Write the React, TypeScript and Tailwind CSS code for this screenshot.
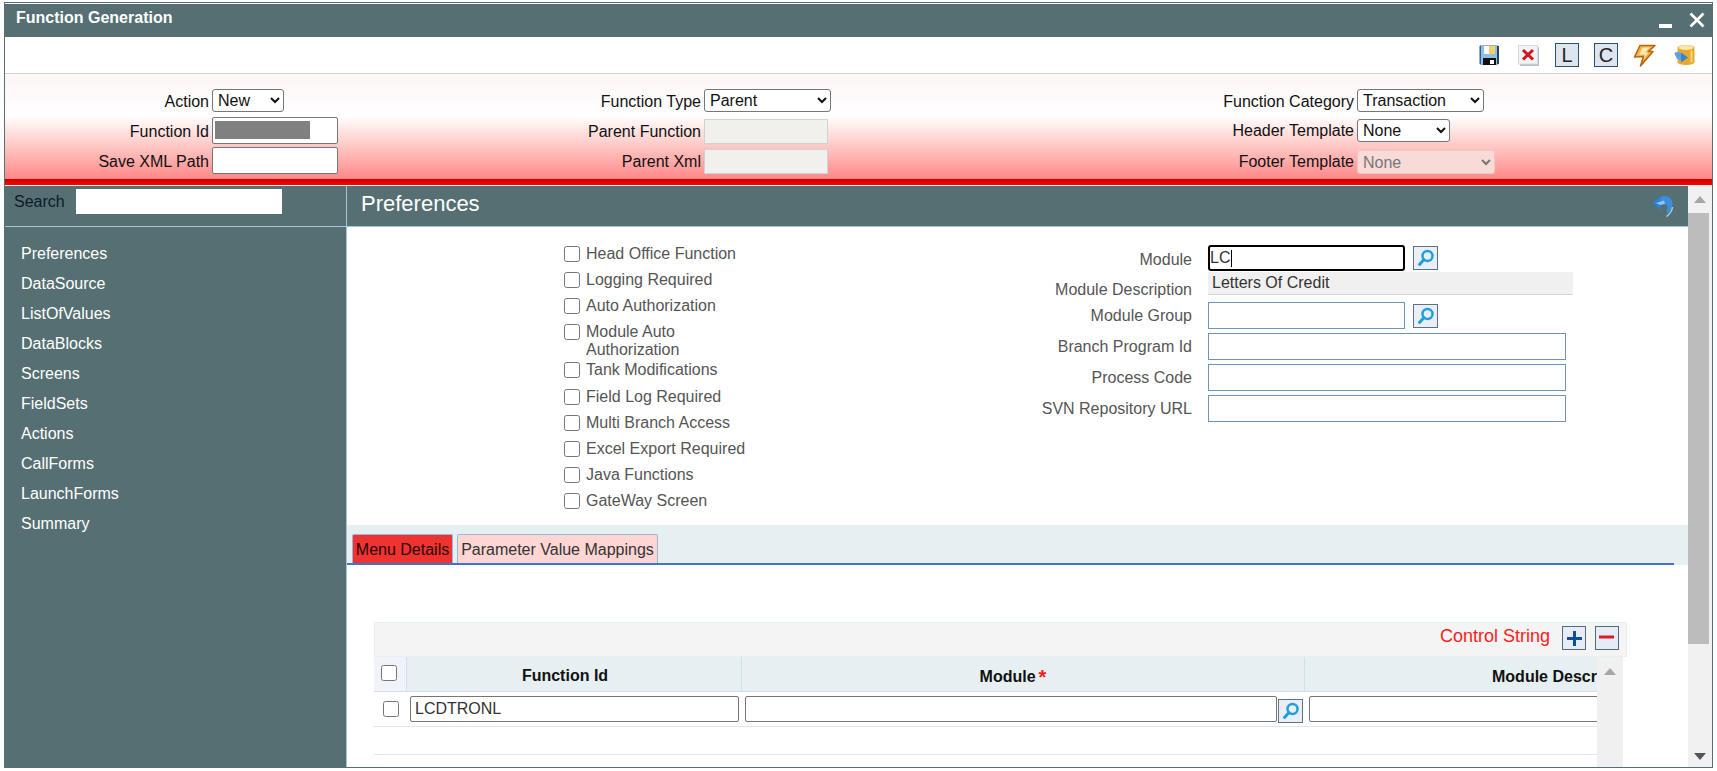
import React from "react";

const Search = () => (
  <svg width="18" height="18" viewBox="0 0 18 18" fill="none">
    <circle cx="10.5" cy="7" r="5" stroke="#1f9fdc" strokeWidth="2.5" />
    <path d="M7 10.5 L2.5 15.5" stroke="#1f9fdc" strokeWidth="3" strokeLinecap="round" />
  </svg>
);

const SearchBtn = () => (
  <button className="w-[25px] h-[24px] shrink-0 flex items-center justify-center border border-[#5a7480] bg-[#e9eef8]">
    <Search />
  </button>
);

const Floppy = () => (
  <svg width="20" height="20" viewBox="0 0 20 20">
    <rect x="0.5" y="0.5" width="19" height="19" rx="1" fill="#2f5f8f" />
    <rect x="2" y="1" width="16" height="18" fill="#8fc0ea" />
    <rect x="5" y="1" width="11" height="8" fill="#fff" />
    <rect x="10" y="1" width="6" height="8" fill="#f5cf6e" />
    <rect x="4" y="13" width="13" height="7" fill="#111" />
    <rect x="11" y="15" width="4" height="4" fill="#fff" />
    <rect x="18" y="1" width="2" height="18" fill="#27455f" />
  </svg>
);

const CloseIcon = () => (
  <svg width="21" height="21" viewBox="0 0 21 21">
    <rect x="2" y="2" width="19" height="19" fill="#b9bec6" />
    <rect x="0.5" y="0.5" width="19" height="18.5" fill="#f1f3f8" stroke="#d5d9e2" />
    <path d="M5 5 L15 14.5 M15 5 L5 14.5" stroke="#d3141c" strokeWidth="3" />
  </svg>
);

const Bolt = () => (
  <svg width="23" height="23" viewBox="0 0 23 23">
    <path d="M7 1.5 L22 1.5 L15.5 7.5 L20 7.5 L7.5 22 L10.5 12.5 L1.5 13 Z" fill="#f3b24c" stroke="#b8660f" strokeWidth="1.6" strokeLinejoin="round" />
    <path d="M9.5 3.5 L17 3.5 L12 8.5 L15.5 8.5 L10.5 15 L12 10.5 L6 11 Z" fill="#fce9b4" />
  </svg>
);

const Db = () => (
  <svg width="21" height="22" viewBox="0 0 21 22">
    <path d="M3.5 3.5 C3.5 0 20.5 0 20.5 3.5 L20.5 18 C20.5 22 3.5 22 3.5 18 Z" fill="#e6a92e" />
    <ellipse cx="12" cy="3.5" rx="7.5" ry="2.6" fill="#f8e6a8" />
    <path d="M17.5 6.5 L17.5 18.5" stroke="#f8d680" strokeWidth="2" />
    <path d="M0.5 9 C2 7.5 5 7.5 7 9 L7 11.5 L10 11.5 L10 15.5 L7 15.5 C5 17 2 15 0.5 9 Z" fill="#58a2e8" />
    <path d="M7 8.5 L14 13.5 L7 18.5 Z" fill="#3a7fd4" />
  </svg>
);

const Refresh = () => (
  <svg width="22" height="23" viewBox="0 0 22 23" fill="none">
    <path d="M8 3.5 C13 0 21 3 20.5 11 C20.3 15 18 18 15 20 L15 15.5 C16.5 12.5 15 8.5 8 10 Z" fill="#3a8ee0" />
    <path d="M0.5 9 L8.5 2 L8.5 16 Z" fill="#2f7fd6" />
    <path d="M4 9 L12 6.5 L13 10 L8 11 Z" fill="#86c6f6" />
    <path d="M20.5 13 C20 17 18 20 14.5 22.5" stroke="#a8c8e0" strokeWidth="1.5" />
  </svg>
);

const BoxLetter = ({ c }: { c: string }) => (
  <div className="w-[24px] h-[24px] shrink-0 border border-[#27506e] bg-[#dfe5ee] flex items-center justify-center text-[20px] leading-none text-[#222]">
    {c}
  </div>
);

const Label = ({ w, children, tone = "text-[#111]" }: { w: string; children: React.ReactNode; tone?: string }) => (
  <label className={`${w} shrink-0 text-right text-[16px] leading-[18px] ${tone}`}>{children}</label>
);

const nativeSelect = "text-[16px] pl-[1px] bg-white border border-[#767676] rounded-[3px] h-[23px] text-[#111]";
const whiteInput = "h-[27px] w-[126px] bg-white border border-[#767676] rounded-[2px] block";
const disabledInput = "h-[25px] w-[124px] bg-[#f1f0ec] border border-[#d2d2d2] block";

const checks = [
  "Head Office Function",
  "Logging Required",
  "Auto Authorization",
  "Module Auto Authorization",
  "Tank Modifications",
  "Field Log Required",
  "Multi Branch Access",
  "Excel Export Required",
  "Java Functions",
  "GateWay Screen",
];

const nav = ["Preferences", "DataSource", "ListOfValues", "DataBlocks", "Screens", "FieldSets", "Actions", "CallForms", "LaunchForms", "Summary"];

const blueInput = "h-[27px] bg-white border border-[#6f94b8] block";

export default function App() {
  return (
    <div className="w-[1717px] h-[771px] bg-white pl-[4px] pr-[4px] pt-[2px] pb-[3px] overflow-hidden font-['Liberation_Sans',Arial,sans-serif]">
      <div className="w-full h-full border border-[#566f73] flex flex-col overflow-hidden bg-white">
        {/* title bar */}
        <div className="h-[33px] shrink-0 bg-[#566f73] flex items-center justify-between pl-[11px] pr-[7px] mt-[1px] text-white">
          <div className="text-[16px] font-bold leading-none -mt-[5px]">Function Generation</div>
          <div className="flex items-start gap-[17px] h-full pt-[7px]">
            <div className="w-[13px] h-[4px] bg-white mt-[13px]" />
            <svg width="16" height="16" viewBox="0 0 16 16" className="mt-[1px]">
              <path d="M1.5 1.5 L14.5 14.5 M14.5 1.5 L1.5 14.5" stroke="#fff" strokeWidth="2.8" />
            </svg>
          </div>
        </div>
        {/* toolbar */}
        <div className="h-[37px] shrink-0 bg-white border-b border-[#c9d6e2] flex items-center justify-end pr-[17px]">
          <div className="flex items-center">
            <div className="mr-[19px]"><Floppy /></div>
            <div className="mr-[16px]"><CloseIcon /></div>
            <div className="mr-[15px]"><BoxLetter c="L" /></div>
            <div className="mr-[15px]"><BoxLetter c="C" /></div>
            <div className="mr-[18px]"><Bolt /></div>
            <Db />
          </div>
        </div>
        {/* header form */}
        <div className="h-[105px] shrink-0 flex bg-gradient-to-b from-[#fff5f5] via-white via-40% to-[#ff8888]">
          <div className="w-[345px] shrink-0 flex flex-col pt-[15px]">
            <div className="flex items-center gap-[3px] h-[23px]">
              <Label w="w-[204px]" tone="text-[#111] pt-[2px]">Action</Label>
              <select className={`${nativeSelect} w-[72px]`} defaultValue="New"><option>New</option></select>
            </div>
            <div className="flex items-center gap-[3px] mt-[5px]">
              <Label w="w-[204px]" tone="text-[#111] pt-[2px]">Function Id</Label>
              <div className={`${whiteInput} pl-[2px] pt-[3px]`}><div className="w-[95px] h-[18px] bg-[#808080]" /></div>
            </div>
            <div className="flex items-center gap-[3px] mt-[3px]">
              <Label w="w-[204px]" tone="text-[#111] pt-[2px]">Save XML Path</Label>
              <input className={whiteInput} />
            </div>
          </div>
          <div className="w-[490px] shrink-0 flex flex-col pt-[15px]">
            <div className="flex items-center gap-[3px] h-[23px]">
              <Label w="w-[351px]" tone="text-[#111] pt-[2px]">Function Type</Label>
              <select className={`${nativeSelect} w-[127px]`} defaultValue="Parent"><option>Parent</option></select>
            </div>
            <div className="flex items-center gap-[3px] mt-[7px]">
              <Label w="w-[351px]">Parent Function</Label>
              <input disabled className={disabledInput} />
            </div>
            <div className="flex items-center gap-[3px] mt-[5px]">
              <Label w="w-[351px]">Parent Xml</Label>
              <input disabled className={disabledInput} />
            </div>
          </div>
          <div className="flex-1 flex flex-col pt-[15px]">
            <div className="flex items-center gap-[3px] h-[23px]">
              <Label w="w-[514px]" tone="text-[#111] pt-[2px]">Function Category</Label>
              <select className={`${nativeSelect} w-[127px]`} defaultValue="Transaction"><option>Transaction</option></select>
            </div>
            <div className="flex items-center gap-[3px] mt-[7px]">
              <Label w="w-[514px]">Header Template</Label>
              <select className={`${nativeSelect} w-[93px]`} defaultValue="None"><option>None</option></select>
            </div>
            <div className="flex items-center gap-[3px] mt-[8px]">
              <Label w="w-[514px]">Footer Template</Label>
              <select disabled className="text-[16px] pl-[1px] h-[24px] w-[138px] border border-[#e9c8c6] rounded-[3px] bg-[#f8dad7] text-[#777]" defaultValue="None"><option>None</option></select>
            </div>
          </div>
        </div>
        <div className="h-[6px] shrink-0 bg-gradient-to-b from-[#c80000] to-[#ff0000]" />
        <div className="h-[1px] shrink-0 bg-[#f2f2f2]" />
        {/* main */}
        <div className="flex-1 min-h-0 flex">
          <aside className="w-[342px] shrink-0 bg-[#566f73] border-r border-[#a9c3d6]">
            <div className="h-[41px] flex items-start border-b border-[#a9c3d6] pl-[9px] pt-[3px]">
              <span className="text-[16px] leading-[25px] text-[#0b1b2b] w-[62px]">Search</span>
              <input className="w-[206px] h-[25px] bg-white block" />
            </div>
            <nav className="flex flex-col pt-[12px] pl-[16px]">
              {nav.map((n) => (
                <div key={n} className="h-[30px] leading-[30px] text-[16px] text-white">{n}</div>
              ))}
            </nav>
          </aside>
          <div className="flex-1 min-w-0 flex">
            <div className="flex-1 min-w-0 flex flex-col overflow-hidden">
              <div className="h-[41px] shrink-0 bg-[#566f73] border-b border-[#a9c3d6] flex items-center justify-between pl-[14px] pr-[14px]">
                <span className="text-[22px] leading-none text-white -mt-[5px]">Preferences</span>
                <div className="-mt-[2px]"><Refresh /></div>
              </div>
              {/* fields */}
              <div className="h-[298px] shrink-0 flex pl-[217px]">
                <div className="w-[207px] shrink-0 pt-[18px]">
                  {checks.map((c, i) => (
                    <div key={c} className={`flex items-start min-h-[26px] ${i === 3 ? "mb-[2px]" : i === 4 ? "mb-[1px]" : ""}`}>
                      <input type="checkbox" className="w-[16px] h-[16px] mt-[1px] shrink-0 m-0" />
                      <span className="ml-[6px] text-[16px] leading-[18px] text-[#555] w-[165px]">{c}</span>
                    </div>
                  ))}
                </div>
                <div className="flex-1 flex flex-col pt-[18px]">
                  <div className="flex items-center gap-[16px]">
                    <Label w="w-[421px]" tone="text-[#555] pt-[4px]">Module</Label>
                    <div className="relative">
                      <input readOnly defaultValue="LC" className="w-[197px] h-[26px] pl-0 text-[16px] text-[#333] bg-white border-2 border-black rounded-[3px] block outline-none" />
                      <div className="absolute left-[23px] top-[5px] w-[1px] h-[17px] bg-black" />
                    </div>
                    <div className="ml-[-8px]"><SearchBtn /></div>
                  </div>
                  <div className="flex items-center gap-[16px]">
                    <Label w="w-[421px]" tone="text-[#555] pt-[10px]">Module Description</Label>
                    <div className="w-[365px] h-[23px] self-start mt-[1px] bg-[#f0f0f0] border-b border-[#d5d5d5] pl-[4px] text-[16px] leading-[21px] text-[#333]">Letters Of Credit</div>
                  </div>
                  <div className="flex items-center gap-[16px] mt-[3px]">
                    <Label w="w-[421px]" tone="text-[#555]">Module Group</Label>
                    <input className={`${blueInput} w-[197px]`} />
                    <div className="ml-[-8px]"><SearchBtn /></div>
                  </div>
                  <div className="flex items-center gap-[16px] mt-[4px]">
                    <Label w="w-[421px]" tone="text-[#555]">Branch Program Id</Label>
                    <input className={`${blueInput} w-[358px]`} />
                  </div>
                  <div className="flex items-center gap-[16px] mt-[4px]">
                    <Label w="w-[421px]" tone="text-[#555]">Process Code</Label>
                    <input className={`${blueInput} w-[358px]`} />
                  </div>
                  <div className="flex items-center gap-[16px] mt-[4px]">
                    <Label w="w-[421px]" tone="text-[#555]">SVN Repository URL</Label>
                    <input className={`${blueInput} w-[358px]`} />
                  </div>
                </div>
              </div>
              {/* tabs */}
              <div className="h-[40px] shrink-0 bg-[#e6f0f2] pt-[9px] pr-[14px]">
                <div className="h-[31px] border-b-2 border-[#3f76c4] flex items-start pl-[5px] gap-[4px]">
                  <div className="h-[29px] w-[101px] bg-[#ef3330] border border-[#9cb6d8] border-b-0 rounded-t-[2px] text-[16px] leading-[29px] text-center text-[#2a0808]">Menu Details</div>
                  <div className="h-[29px] w-[201px] bg-[#ffd6d3] border border-[#9cb6d8] border-b-0 rounded-t-[2px] text-[16px] leading-[29px] text-center text-[#333]">Parameter Value Mappings</div>
                </div>
              </div>
              {/* table */}
              <div className="flex-1 min-h-0 pt-[57px] pl-[27px] overflow-hidden">
                <div className="w-[1253px]">
                  <div className="h-[35px] bg-[#f4f4f4] border border-[#e6f0f2] flex items-start justify-end pr-[7px] pt-[3px]">
                    <span className="text-[18px] leading-[21px] text-[#ff1a1a] mr-[12px]">Control String</span>
                    <button className="w-[24px] h-[24px] border border-[#4f6d78] bg-[#e6ebf8] flex items-center justify-center mr-[9px]">
                      <svg width="19" height="19" viewBox="0 0 19 19"><path d="M9.5 2 V17 M2 9.5 H17" stroke="#0f4c9c" strokeWidth="3" /></svg>
                    </button>
                    <button className="w-[24px] h-[24px] border border-[#4f6d78] bg-[#e6ebf8] flex items-center justify-center">
                      <svg width="19" height="19" viewBox="0 0 19 19"><path d="M1 8 H16" stroke="#e21a1f" strokeWidth="3" /></svg>
                    </button>
                  </div>
                  <div className="flex w-[1249px] h-[120px]">
                    <div className="w-[1223px] overflow-hidden">
                      <div className="w-[1300px] grid grid-cols-[33px_335px_563px_369px]">
                        <div className="h-[35px] bg-[#f0f4fa] border-r border-b border-[#d3dfe8] flex items-center justify-center pr-[2px]">
                          <input type="checkbox" className="w-[16px] h-[16px] m-0 -mt-[2px]" />
                        </div>
                        <div className="h-[35px] bg-[#e6f0f2] border-r border-b border-[#d3dfe8] flex items-center justify-center pr-[18px] pt-[4px] text-[16px] font-bold text-[#111]">Function Id</div>
                        <div className="h-[35px] bg-[#e6f0f2] border-r border-b border-[#d3dfe8] flex items-center justify-center pr-[20px] pt-[6px] text-[16px] font-bold text-[#111]">
                          Module<span className="text-[#ff1a1a] ml-[3px] text-[20px] leading-none">*</span>
                        </div>
                        <div className="h-[35px] bg-[#e6f0f2] border-b border-[#d3dfe8] flex items-center pl-[187px] pt-[6px] text-[16px] font-bold text-[#111] whitespace-nowrap">Module Description</div>

                        <div className="h-[35px] border-b border-[#dde6f5] flex items-center justify-center">
                          <input type="checkbox" className="w-[16px] h-[16px] m-0" />
                        </div>
                        <div className="h-[35px] border-b border-[#dde6f5] pl-[3px] pt-[4px]">
                          <input readOnly defaultValue="LCDTRONL" className="w-[329px] h-[26px] px-[4px] text-[16px] text-[#333] bg-white border border-[#767676] rounded-[2px] block" />
                        </div>
                        <div className="h-[35px] border-b border-[#dde6f5] pl-[3px] pt-[4px] flex items-start gap-[1px]">
                          <input className="w-[532px] h-[26px] bg-white border border-[#767676] rounded-[2px] block" />
                          <div className="mt-[3px]"><SearchBtn /></div>
                        </div>
                        <div className="h-[35px] border-b border-[#dde6f5] pl-[4px] pt-[4px]">
                          <input className="w-[360px] h-[26px] bg-white border border-[#767676] rounded-[2px] block" />
                        </div>

                        <div className="col-span-4 h-[28px] border-b border-[#dde6f5]" />
                      </div>
                    </div>
                    <div className="w-[26px] bg-[#f0f0f0] flex flex-col items-center pt-[11px]">
                      <div className="w-0 h-0 border-l-[6px] border-r-[6px] border-b-[7px] border-l-transparent border-r-transparent border-b-[#a6a6a6]" />
                    </div>
                  </div>
                </div>
              </div>
            </div>
            {/* page scrollbar */}
            <div className="w-[24px] shrink-0 bg-[#f1f1f1] flex flex-col">
              <div className="h-[27px] shrink-0 flex items-center justify-center">
                <div className="w-0 h-0 border-l-[6px] border-r-[6px] border-b-[7px] border-l-transparent border-r-transparent border-b-[#a6a6a6]" />
              </div>
              <div className="h-[431px] w-[21px] shrink-0 bg-[#bcbcbc]" />
              <div className="flex-1 flex items-end justify-center pb-[7px]">
                <div className="w-0 h-0 border-l-[6px] border-r-[6px] border-t-[7px] border-l-transparent border-r-transparent border-t-[#555]" />
              </div>
            </div>
          </div>
        </div>
      </div>
    </div>
  );
}
